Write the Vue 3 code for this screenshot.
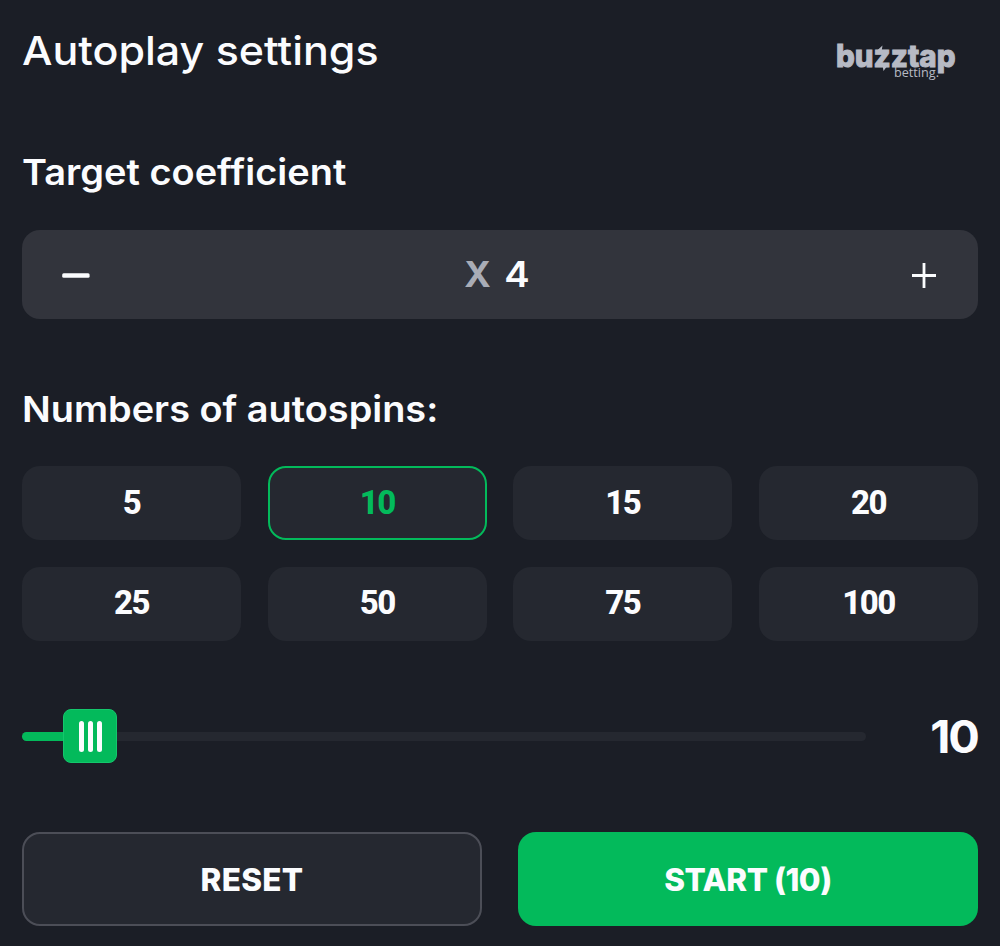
<script setup>
import { computed, ref } from 'vue'

const options = [5, 10, 15, 20, 25, 50, 75, 100]
const coefficient = ref(4)
const spins = ref(10)

// the handle covers 54px of the 844px track
const fillWidth = computed(() => `${Math.max(0, spins.value - 5) * 0.98}%`)

function decrease() {
  coefficient.value = Math.max(1, coefficient.value - 1)
}

function reset() {
  coefficient.value = 4
  spins.value = 10
}
</script>

<template>
  <div class="autoplay">
    <header class="autoplay__header">
      <h1 class="autoplay__title">Autoplay settings</h1>
      <svg class="autoplay__logo" width="124" height="44" viewBox="0 0 124 44">
        <text class="logo-name" x="2" y="28.8" textLength="119.5" lengthAdjust="spacingAndGlyphs">buzztap</text>
        <!-- bolt through the first z -->
        <path d="M41.5 14 L48.5 7.5 L47.5 14 Z M55 25.5 L49.5 33 L48.5 27 Z" />
        <text class="logo-sub" x="60" y="39" textLength="45" lengthAdjust="spacingAndGlyphs">betting.</text>
      </svg>
    </header>

    <h2 class="autoplay__label autoplay__label--target">Target coefficient</h2>
    <div class="stepper">
      <button class="stepper__btn" aria-label="Decrease" @click="decrease">
        <svg width="28" height="28" viewBox="0 0 28 28">
          <rect x="0.2" y="12.2" width="27.4" height="4.6" rx="1.5" />
        </svg>
      </button>
      <div class="stepper__value">
        <span class="stepper__x">X</span>
        <span class="stepper__number">{{ coefficient }}</span>
      </div>
      <button class="stepper__btn" aria-label="Increase" @click="coefficient++">
        <svg width="28" height="28" viewBox="0 0 28 28">
          <path d="M14 2v25M2 14.5h24" fill="none" stroke="#fbfcfe" stroke-width="2.8" />
        </svg>
      </button>
    </div>

    <h2 class="autoplay__label autoplay__label--spins">Numbers of autospins:</h2>
    <div class="options">
      <button
        v-for="option in options"
        :key="option"
        class="options__item"
        :class="{ 'options__item--active': option === spins }"
        @click="spins = option"
      >
        {{ option }}
      </button>
    </div>

    <div class="slider">
      <div class="slider__track">
        <div class="slider__fill" :style="{ width: fillWidth }"></div>
        <div class="slider__handle">
          <span></span>
          <span></span>
          <span></span>
        </div>
      </div>
      <span class="slider__value">{{ spins }}</span>
    </div>

    <div class="actions">
      <button class="actions__btn actions__btn--reset" @click="reset">RESET</button>
      <button class="actions__btn actions__btn--start">START ({{ spins }})</button>
    </div>
  </div>
</template>

<style>
body {
  background: #1b1e26;
}
</style>

<style scoped>
.autoplay {
  box-sizing: border-box;
  width: 1000px;
  height: 946px;
  padding: 20px 22px 20px;
  background: #1b1e26;
  color: #fbfcfe;
  font-family: Inter, 'Liberation Sans', sans-serif;
}

button {
  margin: 0;
  padding: 0;
  border: 0;
  background: none;
  color: inherit;
  font-family: inherit;
  cursor: pointer;
}

.autoplay__header {
  display: flex;
  justify-content: space-between;
  height: 60px;
  padding-right: 20px;
}

.autoplay__title {
  margin: 0;
  font-size: 40px;
  font-weight: 500;
  line-height: 62px;
  transform: scaleX(1.074);
  transform-origin: left;
}

.autoplay__logo {
  margin-top: 18px;
  overflow: visible;
  fill: #b7bac4;
}

.logo-name {
  font-family: Inter, sans-serif;
  font-size: 31px;
  font-weight: 800;
  stroke: #b7bac4;
  stroke-width: 1px;
}

.logo-sub {
  font-family: 'Open Sans', sans-serif;
  font-size: 13px;
}

.autoplay__label {
  margin: 0;
  font-size: 35.5px;
  font-weight: 600;
  line-height: 50px;
  transform: scaleX(1.069);
  transform-origin: left;
}

.autoplay__label--target {
  margin-top: 68px;
}

.autoplay__label--spins {
  margin-top: 66px;
  transform: scaleX(1.067);
}

.stepper {
  display: flex;
  align-items: center;
  justify-content: space-between;
  height: 89px;
  margin-top: 32px;
  padding: 0 40px;
  box-sizing: border-box;
  border-radius: 18px;
  background: #32343c;
}

.stepper__btn {
  display: flex;
  width: 28px;
  height: 28px;
  fill: #fbfcfe;
}

.stepper__value {
  display: flex;
  align-items: center;
  gap: 14px;
  padding-right: 7px;
  padding-bottom: 2px;
  font-size: 36px;
  font-weight: 600;
  line-height: 48px;
}

.stepper__x {
  color: #a9acb6;
  font-weight: 700;
}

.stepper__number {
  transform: scaleX(1.06);
}

.options {
  display: grid;
  grid-template-columns: repeat(4, 219px);
  grid-auto-rows: 74px;
  justify-content: space-between;
  row-gap: 26.5px;
  margin-top: 31px;
}

.options__item {
  padding: 0 0 2px;
  border: 2px solid transparent;
  border-radius: 18px;
  background: #252830;
  font-family: Roboto, sans-serif;
  font-size: 33px;
  font-weight: 800;
  letter-spacing: -1.5px;
}

.options__item--active {
  border-color: #03ba5b;
  color: #03ba5b;
}

.slider {
  display: flex;
  align-items: center;
  justify-content: space-between;
  height: 60px;
  margin-top: 65.5px;
}

.slider__track {
  display: flex;
  align-items: center;
  width: 844px;
  height: 9px;
  border-radius: 5px;
  background: #252830;
}

.slider__fill {
  height: 9px;
  border-radius: 5px 0 0 5px;
  background: #03ba5b;
}

.slider__handle {
  display: flex;
  align-items: center;
  justify-content: center;
  gap: 4px;
  flex: none;
  width: 54px;
  height: 54px;
  border-radius: 8px;
  box-sizing: border-box;
  border: 1px solid #14c76c;
  background: #03ba5b;
}

.slider__handle span {
  width: 5px;
  height: 31px;
  border-radius: 2.5px;
  background: #fbfcfe;
}

.slider__value {
  padding-top: 2px;
  font-size: 45px;
  font-weight: 700;
  letter-spacing: -2px;
  line-height: 58px;
  transform: scaleX(1.04);
  transform-origin: right;
}

.actions {
  display: grid;
  grid-template-columns: 1fr 1fr;
  gap: 36px;
  margin-top: 66px;
}

.actions__btn {
  height: 94px;
  border-radius: 18px;
  font-size: 31.5px;
  font-weight: 800;
  letter-spacing: -0.5px;
}

.actions__btn--reset {
  border: 2px solid #4c4e57;
  background: #252830;
  letter-spacing: 0.3px;
}

.actions__btn--start {
  background: #03ba5b;
}
</style>
